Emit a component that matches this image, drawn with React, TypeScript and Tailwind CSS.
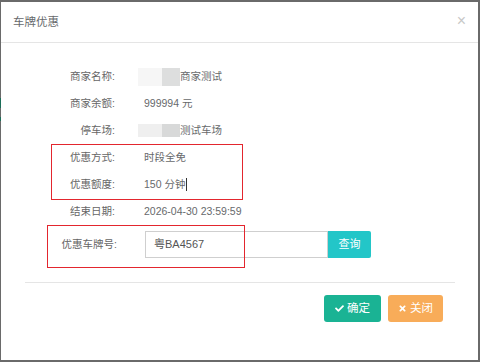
import React from "react";
import { FaCheck, FaTimes } from "react-icons/fa";

const cjk = { fontFamily: '"Liberation Sans", "Noto Sans CJK SC", sans-serif' };

function Row({ label, children }: { label: string; children: React.ReactNode }) {
  return (
    <div className="flex h-[27px] items-center">
      <div className="w-[114px] text-right text-[#666]">{label}</div>
      <div className="ml-[29px] flex items-center text-[#676a6c]">{children}</div>
    </div>
  );
}

export default function App() {
  return (
    <div className="relative flex h-[362px] w-[480px] overflow-hidden bg-[#6a6a6a] pt-[2px]" style={cjk}>
      <div className="flex w-[1px] flex-col">
        <div className="h-[96px]" />
        <div className="h-[10px] bg-[#1b6e58]" />
        <div className="h-[9px]" />
        <div className="h-[4px] bg-[#1b6e58]" />
      </div>
      <div className="flex h-[358px] w-[477px] flex-col bg-white text-[10.5px]">
        <div className="flex h-[41px] items-center justify-between border-b border-[#e5e5e5] pl-[12px] pr-[12px] pt-[2px]">
          <span className="text-[11.5px] text-[#676a6c]">车牌优惠</span>
          <span className="-mt-[5px] text-[16px] leading-none text-[#c8c8c8]">×</span>
        </div>
        <div className="flex flex-col pt-[20px]">
          <Row label="商家名称:">
            <span className="-ml-[6px] flex h-[18px]">
              <span className="w-[24px] bg-[#f6f6f6]" />
              <span className="w-[18px] bg-[#dddede]" />
            </span>
            <span>商家测试</span>
          </Row>
          <Row label="商家余额:">
            <span>999994 元</span>
          </Row>
          <Row label="停车场:">
            <span className="-ml-[6px] flex h-[13px]">
              <span className="w-[24px] bg-[#efefef]" />
              <span className="w-[18px] bg-[#d8d9d9]" />
            </span>
            <span>测试车场</span>
          </Row>
          <Row label="优惠方式:">
            <span>时段全免</span>
          </Row>
          <Row label="优惠额度:">
            <span>150 分钟</span>
            <span className="ml-[1px] h-[13px] w-[1px] bg-[#333]" />
          </Row>
          <Row label="结束日期:">
            <span>2026-04-30 23:59:59</span>
          </Row>
          <div className="mt-[6px] flex h-[27px] items-center">
            <div className="w-[116px] text-right text-[#666]">优惠车牌号:</div>
            <div className="ml-[28px] flex h-[27px] w-[183px] items-center border border-[#cfcfcf] pl-[8px] text-[11px] text-[#555]">
              粤BA4567
            </div>
            <div className="flex h-[27px] w-[43px] items-center justify-center rounded-r-[2px] bg-[#23c6c8] text-[11px] text-white">
              查询
            </div>
          </div>
        </div>
        <div className="ml-[24px] mr-[23px] mt-[24px] border-t border-[#e5e5e5]" />
        <div className="flex justify-end gap-[7px] pr-[35px] pt-[12px]">
          <div className="flex h-[27px] w-[57px] items-center justify-center gap-[3px] rounded-[3px] bg-[#1ab394] text-[11.5px] text-white">
            <FaCheck className="h-[9px] w-[9px]" />
            <span>确定</span>
          </div>
          <div className="flex h-[27px] w-[55px] items-center justify-center gap-[3px] rounded-[3px] bg-[#f8ac59] text-[11.5px] text-white">
            <FaTimes className="h-[9px] w-[9px]" />
            <span>关闭</span>
          </div>
        </div>
      </div>
      <div className="absolute left-[51px] top-[144px] h-[56px] w-[192px] border border-[#e3262e]" />
      <div className="absolute left-[47px] top-[225px] h-[43px] w-[198px] border border-[#e3262e]" />
    </div>
  );
}
